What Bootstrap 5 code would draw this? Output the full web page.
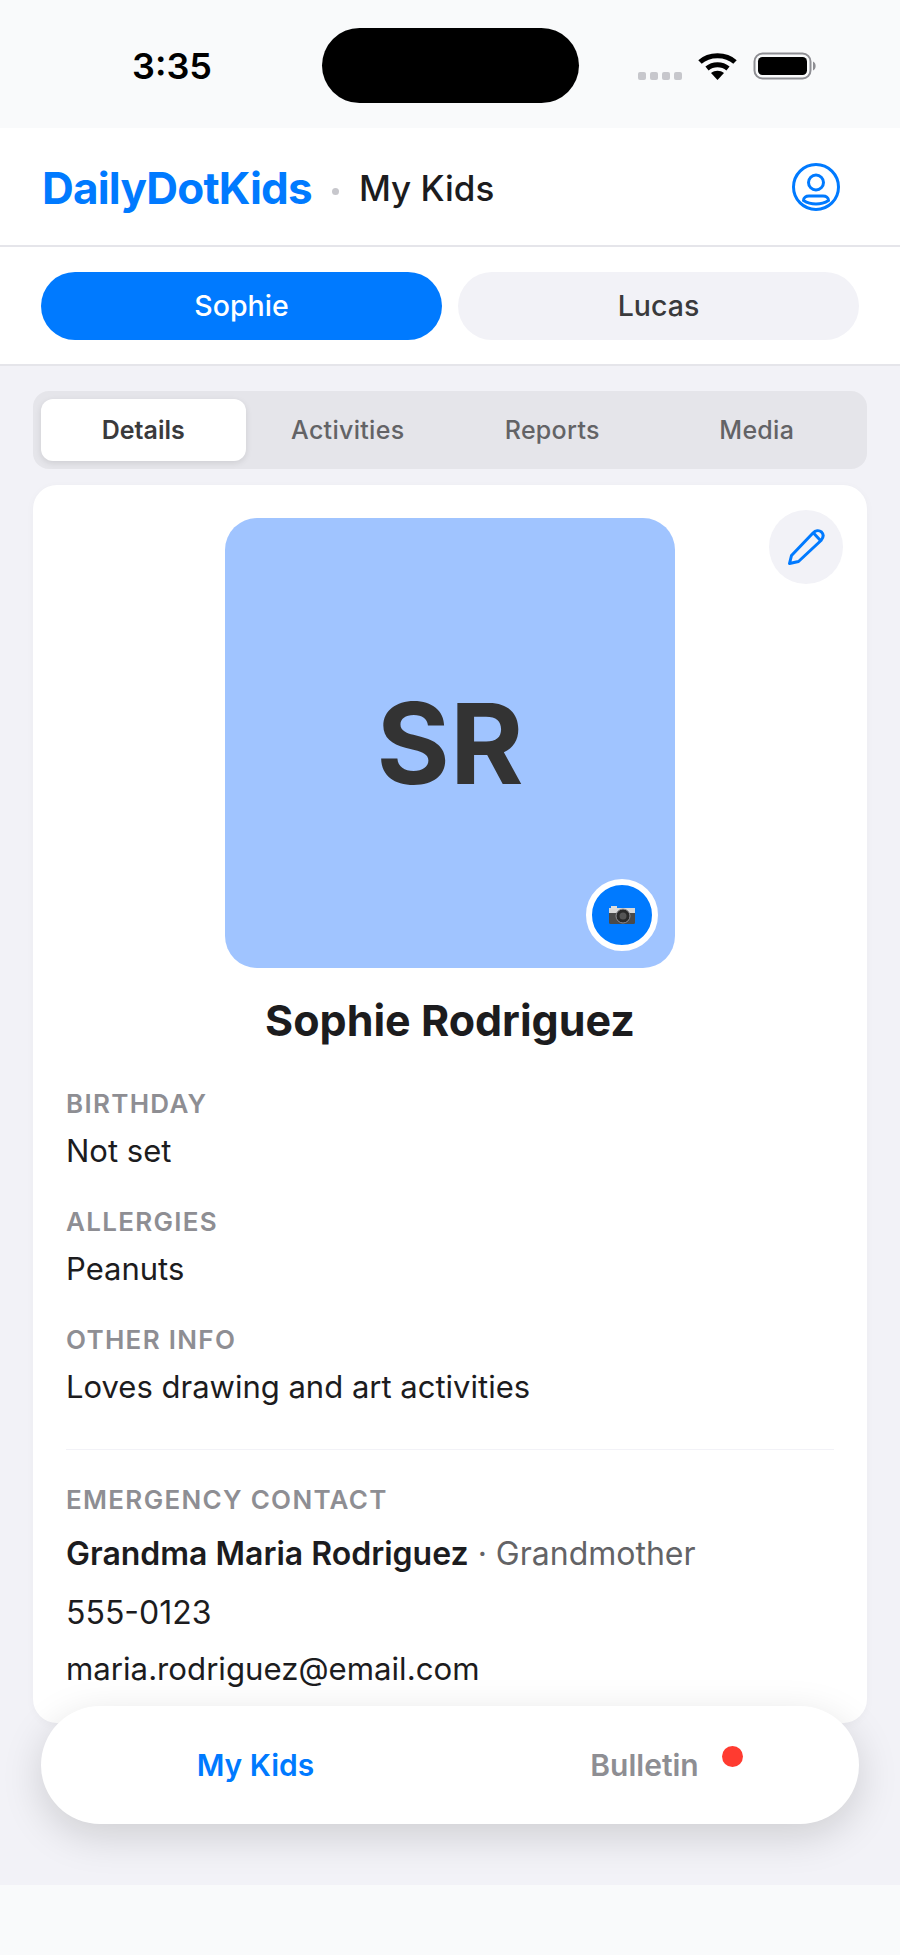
<!DOCTYPE html>
<html lang="en">

<head>
    <meta charset="UTF-8">
    <meta name="viewport" content="width=device-width, initial-scale=1.0">
    <title>DailyDotKids - My Kids</title>
    <link href="https://cdn.jsdelivr.net/npm/bootstrap@5.3.0/dist/css/bootstrap.min.css" rel="stylesheet">
    <style>
        body {
            font-family: Inter, "Liberation Sans", sans-serif;
            background-color: #f9fafb;
            color: #1c1c1e;
        }

        .app-frame {
            height: 1955px;
            overflow: hidden;
        }

        .status-strip {
            height: 128px;
            background-color: #f9fafb;
            padding: 3px 83px 0 132px;
        }

        .status-time {
            font-size: 36px;
            font-weight: 600;
            color: #000;
            width: 190px;
            line-height: 1;
        }

        .island {
            width: 257px;
            height: 75px;
            border-radius: 38px;
            background-color: #000;
        }

        .signal-dots {
            gap: 4px;
            margin-top: 20px;
            margin-right: 16px;
        }

        .signal-dots span {
            width: 8px;
            height: 8px;
            border-radius: 2px;
            background-color: #c7c7cc;
        }

        .top-head {
            height: 119px;
            padding: 0 42px;
            background-color: #fff;
            border-bottom: 2px solid #e5e5ea;
        }

        .brand-word {
            font-size: 44px;
            font-weight: 700;
            color: #007aff;
            letter-spacing: -0.8px;
            margin-top: 2px;
        }

        .brand-dot {
            width: 7px;
            height: 7px;
            border-radius: 50%;
            background-color: #c7c7cc;
            margin: 10px 20px 0 20px;
        }

        .page-word {
            font-size: 35px;
            font-weight: 500;
            margin-top: 4px;
        }

        .profile-icon {
            margin-right: 17px;
        }

        .kid-row {
            height: 119px;
            padding: 0 41px;
            gap: 16px;
            background-color: #fff;
            border-bottom: 2px solid #e5e5ea;
        }

        .kid-pill {
            flex: 1;
            height: 68px;
            border: 0;
            border-radius: 34px;
            padding-top: 2px;
            font-size: 28.500px;
            font-weight: 500;
            background-color: #f2f2f7;
            color: #3a3a3c;
        }

        .kid-pill.is-on {
            background-color: #007aff;
            color: #fff;
        }

        .main-area {
            flex: 1;
            background-color: #f2f2f7;
            padding: 25px 33px 0;
            position: relative;
            min-height: 0;
        }

        .tab-strip {
            height: 78px;
            padding: 8px;
            border-radius: 16px;
            background-color: #e5e5ea;
        }

        .tab-item {
            flex: 1;
            border-radius: 12px;
            padding-top: 2px;
            font-size: 25px;
            font-weight: 500;
            letter-spacing: .3px;
            color: #636366;
        }

        .tab-item.is-on {
            background-color: #fff;
            color: #3a3a3c;
            font-weight: 600;
            letter-spacing: 0;
            box-shadow: 0 2px 6px rgba(0, 0, 0, .1);
        }

        .detail-card {
            margin-top: 16px;
            height: 1238px;
            padding: 33px;
            border-radius: 24px;
            background-color: #fff;
            position: relative;
            box-shadow: 0 2px 10px rgba(0, 0, 0, .03);
        }

        .edit-btn {
            position: absolute;
            top: 25px;
            right: 24px;
            width: 74px;
            height: 74px;
            border-radius: 50%;
            background-color: #f2f2f7;
        }

        .avatar-box {
            width: 450px;
            height: 450px;
            margin: 0 auto;
            border-radius: 32px;
            background-color: #a0c4ff;
            color: #333;
            font-size: 112px;
            font-weight: 700;
            position: relative;
        }

        .camera-badge {
            position: absolute;
            right: 17px;
            bottom: 17px;
            width: 72px;
            height: 72px;
            border-radius: 50%;
            border: 6px solid #fff;
            background-color: #007aff;
        }

        .kid-name {
            font-size: 43px;
            font-weight: 700;
            text-align: center;
            margin: 26px 0 0;
            line-height: 52px;
        }

        .field-label {
            font-size: 26px;
            font-weight: 600;
            letter-spacing: 1.3px;
            line-height: 30px;
            color: #8e8e93;
        }

        .field-value {
            font-size: 31px;
            line-height: 40px;
            margin-top: 12px;
            margin-bottom: 36px;
        }

        .first-field {
            margin-top: 43px;
        }

        .card-rule {
            height: 1px;
            background-color: #f2f2f7;
            margin: 42px 0 35px;
        }

        .contact-line {
            font-size: 31.200px;
            line-height: 40px;
            margin-top: 16px;
        }

        .contact-first {
            font-size: 32px;
            margin-top: 19px;
        }

        .contact-phone {
            font-size: 32px;
            margin-top: 19px;
        }

        .contact-sub {
            color: #636366;
        }

        .float-nav {
            position: absolute;
            left: 41px;
            right: 41px;
            top: 1340px;
            height: 118px;
            padding: 0 20px;
            border-radius: 59px;
            background-color: #fff;
            box-shadow: 0 12px 40px rgba(0, 0, 0, .15);
            font-size: 30px;
            font-weight: 600;
        }

        .nav-slot {
            flex: 1;
            text-align: center;
            color: #8e8e93;
        }

        .nav-slot.is-on {
            color: #007aff;
        }

        .nav-text {
            position: relative;
        }

        .red-dot {
            position: absolute;
            width: 21px;
            height: 21px;
            border-radius: 50%;
            background-color: #ff3b30;
            left: calc(100% + 23px);
            top: -1px;
        }

        .home-strip {
            height: 70px;
            background-color: #f9fafb;
        }
    </style>
</head>

<body>
    <div class="app-frame d-flex flex-column">
        <div class="status-strip d-flex align-items-center flex-shrink-0">
            <div class="status-time">3:35</div>
            <div class="island"></div>
            <div class="d-flex align-items-center ms-auto">
                <div class="signal-dots d-flex"><span></span><span></span><span></span><span></span></div>
                <svg width="39" height="28" viewBox="0 0 39 28">
                    <path d="M2 10 C11 1.500 28 1.500 37 10" fill="none" stroke="#000" stroke-width="5" />
                    <path d="M9 16.500 C15 11.500 24 11.500 30 16.500" fill="none" stroke="#000" stroke-width="5" />
                    <path d="M13 21 C17 18 22 18 26 21 L19.500 28 Z" fill="#000" />
                </svg>
                <svg class="ms-3" width="64" height="28" viewBox="0 0 64 28">
                    <rect x="1.500" y="1.500" width="56" height="25" rx="8" fill="none" stroke="#8e8e93" stroke-width="2" />
                    <rect x="5" y="5" width="49" height="18" rx="4.500" fill="#000" />
                    <path d="M60 9.500 C63.500 11 63.500 17 60 18.500 Z" fill="#8e8e93" />
                </svg>
            </div>
        </div>

        <div class="top-head d-flex align-items-center flex-shrink-0">
            <span class="brand-word">DailyDotKids</span>
            <span class="brand-dot"></span>
            <span class="page-word">My Kids</span>
            <svg class="profile-icon ms-auto" width="50" height="50" viewBox="0 0 50 50" fill="none" stroke="#007aff" stroke-width="3">
                <circle cx="25" cy="25" r="22.500" />
                <circle cx="25" cy="20.500" r="7.500" />
                <path d="M12.500 38.500 C12.500 35.500 15 34 18 34 H32 C35 34 37.500 35.500 37.500 38.500 C33.500 41 29.500 42 25 42 C20.500 42 16.500 41 12.500 38.500 Z" />
            </svg>
        </div>

        <div class="kid-row d-flex align-items-center flex-shrink-0">
            <button class="kid-pill is-on">Sophie</button>
            <button class="kid-pill">Lucas</button>
        </div>

        <div class="main-area">
            <div class="tab-strip d-flex">
                <div class="tab-item is-on d-flex align-items-center justify-content-center">Details</div>
                <div class="tab-item d-flex align-items-center justify-content-center">Activities</div>
                <div class="tab-item d-flex align-items-center justify-content-center">Reports</div>
                <div class="tab-item d-flex align-items-center justify-content-center">Media</div>
            </div>

            <div class="detail-card">
                <div class="edit-btn d-flex align-items-center justify-content-center">
                    <svg width="38" height="38" viewBox="0 0 38 38" fill="none" stroke="#007aff" stroke-width="3" stroke-linejoin="round">
                        <path d="M2.500 35.500 L4.500 27.500 L26 5 C28.500 2.500 32 2 34.500 4 C37 6.500 36.500 9.500 34 12.500 L11.500 33.500 Z" />
                        <path d="M26.500 5 L33.500 12.500" />
                    </svg>
                </div>
                <div class="avatar-box d-flex align-items-center justify-content-center">
                    SR
                    <div class="camera-badge d-flex align-items-center justify-content-center">
                        <svg width="26" height="20" viewBox="0 0 26 20">
                            <rect x="0" y="3" width="26" height="16" rx="1.500" fill="#4a4a4a" />
                            <rect x="0" y="3" width="26" height="5" fill="#d9d9d9" />
                            <rect x="2" y="1" width="6" height="3" fill="#ddd" />
                            <circle cx="14" cy="11" r="7" fill="#2a2a2a" stroke="#8e8e93" stroke-width="1" />
                            <circle cx="14" cy="11" r="3.500" fill="#555" />
                        </svg>
                    </div>
                </div>
                <h1 class="kid-name">Sophie Rodriguez</h1>

                <div class="field-label first-field">BIRTHDAY</div>
                <div class="field-value">Not set</div>
                <div class="field-label">ALLERGIES</div>
                <div class="field-value">Peanuts</div>
                <div class="field-label">OTHER INFO</div>
                <div class="field-value">Loves drawing and art activities</div>

                <div class="card-rule"></div>

                <div class="field-label">EMERGENCY CONTACT</div>
                <div class="contact-line contact-first"><span class="fw-semibold">Grandma Maria Rodriguez</span> <span class="contact-sub">· Grandmother</span></div>
                <div class="contact-line contact-phone">555-0123</div>
                <div class="contact-line">maria.rodriguez@email.com</div>
            </div>

            <div class="float-nav d-flex align-items-center">
                <div class="nav-slot is-on">My Kids</div>
                <div class="nav-slot"><span class="nav-text">Bulletin<span class="red-dot"></span></span></div>
            </div>
        </div>

        <div class="home-strip flex-shrink-0"></div>
    </div>
    <script src="https://cdn.jsdelivr.net/npm/bootstrap@5.3.0/dist/js/bootstrap.bundle.min.js"></script>
</body>

</html>
